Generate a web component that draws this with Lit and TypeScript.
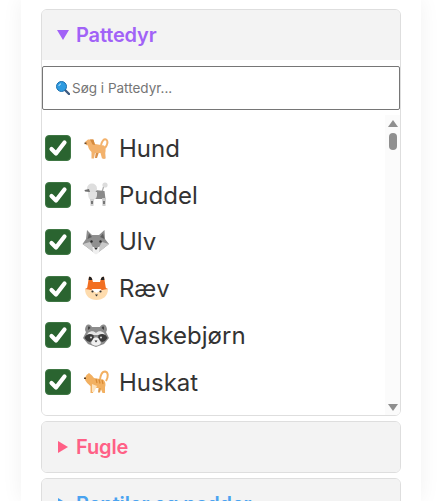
import { LitElement, html, css, svg } from "lit";
import { customElement } from "lit/decorators.js";

const dog = svg`
  <path d="M21 12 C22 8 24 5.5 26 6.5 C28.5 8 27.5 12 25 15" fill="none" stroke="#f3b26c" stroke-width="2"/>
  <path d="M16 18 L15 25 L17 25 L19 19 Z M22 18 L23 25.5 L25.5 25.5 L25 17 Z" fill="#d9904a"/>
  <path d="M5 9 L8 6.5 L13 6.5 L15 11 L24 12.5 C26 14 26 18 25 20 L25 25.5 L22 25.5 L20.5 20 L15 20 L14 25.5 L11.5 25.5 L11.5 19 C9 17 8 14 8 12.5 L6 12 Z" fill="#f3b26c"/>
  <path d="M10 6.5 L13.5 6.5 L15 12 L12.5 11.5 Z" fill="#d48a3e"/>
  <rect x="4.5" y="9.5" width="2" height="1.6" fill="#6b4a2a"/>
`;
const poodle = svg`
  <circle cx="25" cy="5" r="2.6" fill="#dcdcdc"/>
  <path d="M23.5 7 L22 12" stroke="#aaa" stroke-width="1.2"/>
  <path d="M15 10 L24.5 11 L25.5 19 L14 19 Z" fill="#8a8a8a"/>
  <path d="M22 18 H26 L25.5 26 H22.5 Z" fill="#c9c9c9"/>
  <rect x="23" y="21" width="2" height="3" fill="#777"/>
  <circle cx="12" cy="8.5" r="5" fill="#dedede"/>
  <path d="M8 12 C8 17 9 20 12 20 C16 20 17.5 17 17 12 Z" fill="#e2e2e2"/>
  <path d="M10 19 H14 L13.5 26 H10.5 Z" fill="#d0d0d0"/>
  <rect x="11" y="21" width="2" height="3" fill="#777"/>
  <path d="M4.5 10 L9 9 L10 12 L5 11.5 Z" fill="#6e6e6e"/>
`;
const wolf = svg`
  <path d="M7 3 L12 8 L19 8 L24.5 3 L25 12 L29 17 L24 21 L16 27 L8 21 L2.5 17 L6 12 Z" fill="#8f8f8f"/>
  <path d="M9 6.5 L12 10 L7.5 12 Z M23 6.5 L20 10 L24.5 12 Z" fill="#5f5f5f"/>
  <path d="M3 17 L10 15 L13.5 21 L13 25 L8 21 Z M29 17 L22 15 L18.5 21 L19 25 L24 21 Z" fill="#c9c9c9"/>
  <path d="M12.5 20 H19.5 L19 25.5 L16 27.5 L13 25.5 Z" fill="#efefef"/>
  <circle cx="11.5" cy="14.5" r="1.2" fill="#2c2c2c"/><circle cx="20.5" cy="14.5" r="1.2" fill="#2c2c2c"/>
  <path d="M14 20.5 H18 L16 23 Z" fill="#2c2c2c"/>
`;
const fox = svg`
  <path d="M9 3 C10 2 12 3 13 8 L20 8 C21 3 23 2 24 3 L26 15 H7 Z" fill="#f26f21"/>
  <path d="M9 3 C10 2 12 3 12.4 6 L8.6 6 Z M24 3 C23 2 21 3 20.6 6 L24.4 6 Z" fill="#222"/>
  <path d="M5 15 C10 16 12 16 16.5 19 C21 16 23 16 28 15 C28 22 23 26 16.5 26 C10 26 5 22 5 15 Z" fill="#fedcae"/>
  <path d="M5 15 L9 13 L13 16.5 Z M28 15 L24 13 L20 16.5 Z" fill="#f26f21"/>
  <circle cx="12.5" cy="17.5" r="1.1" fill="#333"/><circle cx="20.5" cy="17.5" r="1.1" fill="#333"/>
  <path d="M15 20.5 H18 L16.5 22.5 Z" fill="#333"/>
`;
const raccoon = svg`
  <path d="M6 6 C8 3.5 11 4.5 12 7 H20 C21 4.5 24 3.5 26 6 C27.5 9 27 11 26 12 L29 18 L24 24 L16 27 L8 24 L3 18 L6 12 C5 11 4.5 9 6 6 Z" fill="#8c8c8c"/>
  <path d="M8 7 C9 6 10 7 10.5 8 L8 10 Z M24 7 C23 6 22 7 21.5 8 L24 10 Z" fill="#444"/>
  <path d="M8 13 C11 10.5 14 11 16 13 C18 11 21 10.5 24 13 L25 15 L21 15 L11 15 L7 15 Z" fill="#e6e6e6"/>
  <path d="M4.5 18 C6 14 10 13 13.5 15 L14 19 L10 22 L7 21 Z M27.5 18 C26 14 22 13 18.5 15 L18 19 L22 22 L25 21 Z" fill="#3b3b3b"/>
  <path d="M13 19 C14 17 18 17 19 19 L21 23 C19 26.5 13 26.5 11 23 Z" fill="#f0f0f0"/>
  <circle cx="11" cy="17.5" r="1" fill="#ddd"/><circle cx="21" cy="17.5" r="1" fill="#ddd"/>
  <path d="M14.5 20.5 H17.5 L16 22.5 Z" fill="#333"/>
`;
const cat = svg`
  <path d="M20 13 C20.5 8 21.5 4.5 25 4.5 C28.5 5 28.5 10 26 14" fill="none" stroke="#f2b061" stroke-width="2"/>
  <path d="M19 18 L18 25.5 L20 25.5 L22 19 Z" fill="#dd9a4c"/>
  <path d="M9 6 L12 8.5 L14 11 L23 12.5 C25.5 14 26 18 25 20 L25 26 L22.5 26 L20.5 21 L14 21 L13 26 L10.5 26 L10.5 19 C8 17 5 14 5 12 L5 11 L6.5 8 Z" fill="#f2b061"/>
  <path d="M16 12 L17 16 M19 12.5 L20 16.5 M22 13 L23 17" stroke="#d98a35" stroke-width="1.2" fill="none"/>
  <path d="M12 17 L17 19 L14 25 H12 Z" fill="#fde3bf"/>
  <rect x="4" y="10.5" width="2" height="1.5" fill="#5a3d20"/>
`;

const animals = [
  [dog, "Hund"],
  [poodle, "Puddel"],
  [wolf, "Ulv"],
  [fox, "Ræv"],
  [raccoon, "Vaskebjørn"],
  [cat, "Huskat"],
] as const;

@customElement("app-root")
export class AppRoot extends LitElement {
  static styles = css`
    :host {
      display: block;
      height: 501px;
      overflow: hidden;
      background: #fff;
      font-family: "Inter", "Noto Sans", sans-serif;
    }
    .card {
      width: 400px;
      height: 501px;
      margin-left: 21px;
      padding: 9px 20px 0;
      box-sizing: border-box;
      background: #fff;
      box-shadow: 0 0 20px rgba(0, 0, 0, 0.06);
      display: flex;
      flex-direction: column;
      gap: 5px;
    }
    .group {
      border: 1px solid #dedede;
      border-radius: 6px;
      flex: none;
      overflow: hidden;
    }
    .head {
      height: 49px;
      padding-bottom: 1px;
      background: #f3f3f3;
      display: flex;
      align-items: center;
      gap: 7px;
      padding-left: 15px;
      font-size: 20px;
      font-weight: 600;
      letter-spacing: -0.15px;
    }
    .tri { width: 12px; height: 12px; flex: none; }
    .purple { color: #a162f7; }
    .pink { color: #ff6086; }
    .blue { color: #4aa3f0; }
    .panel { background: #fff; padding-top: 6px; height: 355px; box-sizing: border-box; }
    .search {
      height: 44px;
      box-sizing: border-box;
      border: 1px solid #767676;
      border-radius: 2px;
      display: flex;
      align-items: center;
      gap: 2px;
      padding-left: 13px;
      font-size: 13.5px;
      color: #757575;
    }
    .glass { width: 14px; height: 14px; flex: none; }
    .body { display: flex; height: 300px; margin-top: 5px; }
    .list { flex: 1; padding-top: 10px; display: flex; flex-direction: column; }
    .row {
      height: 46.75px;
      display: flex;
      align-items: center;
      padding-left: 3px;
      flex: none;
      font-size: 24px;
      color: #333;
    }
    .check {
      width: 26px;
      height: 26px;
      border-radius: 4px;
      background: #2a6430;
      border: 1px solid #3f7744;
      box-sizing: border-box;
      flex: none;
    }
    .check svg { width: 24px; height: 24px; display: block; }
    .emoji { width: 30px; height: 30px; margin-left: 9px; margin-right: 9px; flex: none; }
    .bar {
      width: 15px;
      background: #fbfbfb;
      display: flex;
      flex-direction: column;
      align-items: center;
      flex: none;
    }
    .arrow { width: 10px; height: 7px; flex: none; }
    .up { margin-top: 5px; }
    .down { margin-bottom: 4px; }
    .thumb { width: 8px; height: 17px; border-radius: 4px; background: #8f8f8f; margin-top: 6px; flex: none; }
    .spacer { flex: 1; }
  `;

  tri(dir: string, color: string) {
    const pts = dir === "down" ? "0,1 12,1 6,11" : "1,0 11,6 1,12";
    return html`<svg class="tri" viewBox="0 0 12 12"><polygon points=${pts} fill=${color}></polygon></svg>`;
  }

  render() {
    return html`
      <div class="card">
        <section class="group">
          <div class="head purple">${this.tri("down", "#a162f7")}Pattedyr</div>
          <div class="panel">
            <div class="search">
              <svg class="glass" viewBox="0 0 14 14">
                <path d="M9 9 L13 13" stroke="#3d5a80" stroke-width="2.4" stroke-linecap="round"></path>
                <circle cx="5.5" cy="5.5" r="5" fill="#2f9be0" stroke="#1d6fae" stroke-width="1"></circle>
                <path d="M2.8 5 A3 3 0 0 1 5 2.8" stroke="#bfe6ff" stroke-width="1" fill="none"></path>
              </svg>
              <span>Søg i Pattedyr...</span>
            </div>
            <div class="body">
              <div class="list">
                ${animals.map(
                  ([e, n]) => html`<div class="row">
                    <span class="check"><svg viewBox="0 0 24 24"><path d="M5.5 13 L10 17.5 L18.5 6.5" fill="none" stroke="#fff" stroke-width="4.2" stroke-linecap="round" stroke-linejoin="round"></path></svg></span>
                    <svg class="emoji" viewBox="0 0 30 30">${e}</svg>
                    <span>${n}</span>
                  </div>`
                )}
              </div>
              <div class="bar">
                <svg class="arrow up" viewBox="0 0 10 7"><polygon points="5,0 10,7 0,7" fill="#8f8f8f"></polygon></svg>
                <div class="thumb"></div>
                <div class="spacer"></div>
                <svg class="arrow down" viewBox="0 0 10 7"><polygon points="0,0 10,0 5,7" fill="#8f8f8f"></polygon></svg>
              </div>
            </div>
          </div>
        </section>
        <section class="group"><div class="head pink">${this.tri("right", "#ff6086")}Fugle</div></section>
        <section class="group"><div class="head blue">${this.tri("right", "#4aa3f0")}Reptiler og padder</div></section>
      </div>
    `;
  }
}
